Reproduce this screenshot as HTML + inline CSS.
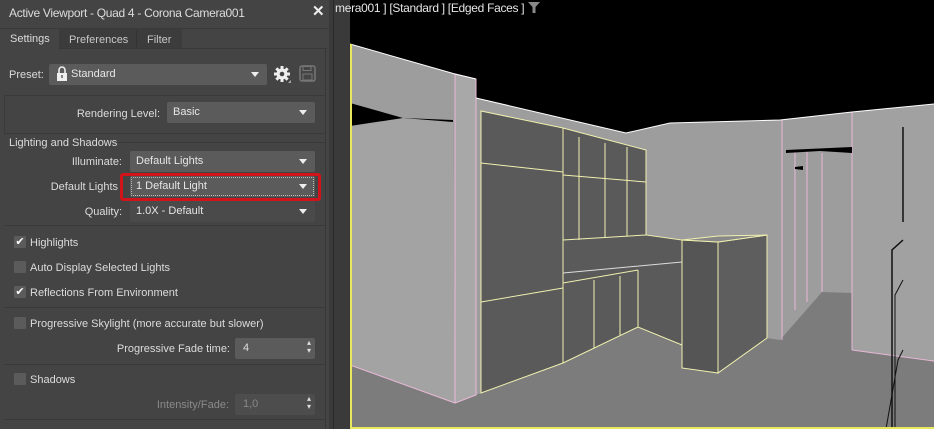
<!DOCTYPE html>
<html><head><meta charset="utf-8"><style>
*{margin:0;padding:0;box-sizing:border-box}
body{width:934px;height:429px;overflow:hidden;background:#000;font-family:"Liberation Sans",sans-serif;font-size:11px;color:#dcdcdc;position:relative}
.a{position:absolute}
#panel{left:0;top:0;width:329px;height:429px;background:#444}
.dd{position:absolute;background:#5b5b5b;border-radius:2px;color:#e6e6e6;padding-left:6px;line-height:21px;height:21px}
.dd:after{content:"";position:absolute;right:8px;top:8px;border-left:4px solid transparent;border-right:4px solid transparent;border-top:5px solid #eee}
.lbl{position:absolute;color:#dcdcdc;line-height:14px;white-space:nowrap}
.r{text-align:right}
.cb{position:absolute;left:14px;width:12px;height:12px;background:#5b5b5b;border-radius:1px;color:#fff;font-size:11px;line-height:12px;text-align:center}
.sep{position:absolute;left:5px;width:320px;height:1px;background:#393939}
.sp{position:absolute;background:#5b5b5b;border-radius:2px;line-height:21px;height:21px;padding-left:8px}
.sp:after{content:"▴\A▾";white-space:pre;position:absolute;right:4px;top:1px;font-size:8px;line-height:8px;color:#ddd}
</style></head><body>
<div id="panel" class="a">
 <div class="lbl" style="left:9px;top:6px;font-size:12px;letter-spacing:-0.3px">Active Viewport - Quad 4 - Corona Camera001</div>
 <div class="lbl" style="left:312px;top:5px;font-size:15px;font-weight:bold;color:#eee">✕</div>
 <div class="a" style="left:0;top:28px;width:329px;height:1px;background:#3a3a3a"></div>
 <div class="a" style="left:59px;top:29px;width:123px;height:19px;background:#3c3c3c"></div>
 <div class="a" style="left:136px;top:30px;width:1px;height:17px;background:#333"></div>
 <div class="lbl" style="left:10px;top:32px">Settings</div>
 <div class="lbl" style="left:69px;top:33px;color:#c8c8c8">Preferences</div>
 <div class="lbl" style="left:147px;top:33px;color:#c8c8c8">Filter</div>
 <div class="a" style="left:59px;top:48px;width:268px;height:1px;background:#383838"></div>
 <div class="a" style="left:325px;top:48px;width:1px;height:381px;background:#383838"></div>
 <div class="lbl" style="left:9px;top:68px">Preset:</div>
 <div class="dd" style="left:49px;top:64px;width:218px;padding-left:22px">Standard</div>
 <svg class="a" style="left:56px;top:66px" width="12" height="16"><path d="M3 7V4a3 3 0 0 1 6 0v3" stroke="#eee" stroke-width="1.6" fill="none"/><rect x="1" y="7" width="10" height="8" fill="#eee"/><rect x="5.3" y="9" width="1.4" height="3" fill="#555"/></svg>
 <svg class="a" style="left:273px;top:65px" width="20" height="20"><g fill="#eee"><circle cx="9" cy="9" r="5.5"/><rect x="7.5" y="1" width="3" height="16"/><rect x="1" y="7.5" width="16" height="3"/><rect x="7.5" y="1" width="3" height="16" transform="rotate(45 9 9)"/><rect x="7.5" y="1" width="3" height="16" transform="rotate(-45 9 9)"/></g><circle cx="9" cy="9" r="2.3" fill="#444"/><path d="M18 15v3h-3z" fill="#aaa"/></svg>
 <svg class="a" style="left:299px;top:65px" width="18" height="18"><rect x="1" y="1" width="15" height="15" rx="2" stroke="#777" stroke-width="1.5" fill="none"/><rect x="4" y="1.5" width="8" height="4" stroke="#777" fill="none"/><rect x="4" y="9" width="9" height="6" stroke="#777" fill="none"/></svg>
 <div class="a" style="left:4px;top:95px;width:322px;height:39px;border:1px solid #3a3a3a;border-right:none"></div>
 <div class="lbl r" style="right:169px;top:107px">Rendering Level:</div>
 <div class="dd" style="left:167px;top:102px;width:148px">Basic</div>
 <div class="lbl" style="left:9px;top:136px">Lighting and Shadows</div>
 <div class="sep" style="top:142px;left:118px;width:207px"></div>
 <div class="lbl r" style="right:207px;top:155px">Illuminate:</div>
 <div class="dd" style="left:130px;top:151px;width:185px">Default Lights</div>
 <div class="lbl r" style="right:211px;top:180px">Default Lights</div>
 <div class="dd" style="left:130px;top:176px;width:185px;outline:1px dotted #bbb;outline-offset:-2px">1 Default Light</div>
 <div class="a" style="left:120px;top:173px;width:201px;height:28px;border:3px solid #d0141a;border-radius:3px"></div>
 <div class="lbl r" style="right:207px;top:205px">Quality:</div>
 <div class="dd" style="left:130px;top:201px;width:185px;background:#4a4a4a">1.0X - Default</div>
 <div class="sep" style="top:225px"></div>
 <div class="cb" style="top:236px">✔</div><div class="lbl" style="left:30px;top:236px">Highlights</div>
 <div class="cb" style="top:261px"></div><div class="lbl" style="left:30px;top:261px">Auto Display Selected Lights</div>
 <div class="cb" style="top:286px">✔</div><div class="lbl" style="left:30px;top:286px">Reflections From Environment</div>
 <div class="sep" style="top:307px"></div>
 <div class="cb" style="top:317px"></div><div class="lbl" style="left:30px;top:317px">Progressive Skylight (more accurate but slower)</div>
 <div class="lbl r" style="right:99px;top:342px">Progressive Fade time:</div>
 <div class="sp" style="left:235px;top:338px;width:80px">4</div>
 <div class="sep" style="top:364px"></div>
 <div class="cb" style="top:373px"></div><div class="lbl" style="left:30px;top:373px">Shadows</div>
 <div class="lbl r" style="right:100px;top:398px;color:#8a8a8a">Intensity/Fade:</div>
 <div class="sp" style="left:235px;top:394px;width:80px;background:#4d4d4d;color:#888">1,0</div>
 <div class="sep" style="top:419px"></div>
</div>
<div class="a" style="left:329px;top:0;width:21px;height:429px;background:#3a3a3a"></div>
<div class="a" style="left:333px;top:0;width:1px;height:429px;background:#2a2a2a"></div>
<svg class="a" style="left:350px;top:0" width="584" height="429">
 <g transform="translate(-350,0)">
 <polygon points="350,44 455,74 476,79 476,98 626,133 670,123 780,120 852,112 934,104 934,429 350,429" fill="#9d9d9d"/>
 <polygon points="350,103 403,118 453,120 453,122 350,126" fill="#000"/>
 <polygon points="350,126 403,118 453,122 455,403 350,365" fill="#a3a3a3"/>
 <polygon points="852,112 934,104 934,360 852,350" fill="#a1a1a1"/>
 <polygon points="350,365 455,403 476,395 563,363 638,327 682,343 682,368 718,373 767,338 780,340 822,292 852,293 852,350 929,360 934,362 934,429 350,429" fill="#7c7c7c"/>
 <polygon points="455,74 476,79 476,395 455,403" fill="#a8a8a8" stroke="#e8b8d8" stroke-width="1"/>
 <polygon points="481,111 563,128 646,150 646,235 682,240 682,345 638,327 563,363 481,393" fill="#5a5a5a" stroke="#f0f0b0" stroke-width="1"/>
 <line x1="481" y1="163" x2="563" y2="172" stroke="#f0f0b0"/>
 <line x1="481" y1="302" x2="563" y2="288" stroke="#f0f0b0"/>
 <line x1="563" y1="128" x2="563" y2="363" stroke="#f0f0b0"/>
 <line x1="563" y1="175" x2="646" y2="182" stroke="#f0f0b0"/>
 <line x1="563" y1="240" x2="646" y2="235" stroke="#f0f0b0"/>
 <line x1="579" y1="137" x2="579" y2="240" stroke="#f0f0b0"/>
 <line x1="605" y1="143" x2="605" y2="238" stroke="#f0f0b0"/>
 <line x1="627" y1="147" x2="627" y2="236" stroke="#f0f0b0"/>
 <line x1="563" y1="283" x2="638" y2="270" stroke="#f0f0b0"/>
 <line x1="563" y1="273" x2="682" y2="262" stroke="#ddd"/>
 <line x1="594" y1="280" x2="594" y2="348" stroke="#f0f0b0"/>
 <line x1="620" y1="276" x2="620" y2="335" stroke="#f0f0b0"/>
 <line x1="638" y1="270" x2="638" y2="327" stroke="#f0f0b0"/>
 <polygon points="682,240 718,242 718,373 682,368" fill="#555" stroke="#f0f0b0"/>
 <polygon points="718,242 767,235 767,338 718,373" fill="#5e5e5e" stroke="#f0f0b0"/>
 <polygon points="682,240 718,236 767,235 718,242" fill="#888" stroke="#f0f0b0"/>
 <line x1="782" y1="120" x2="782" y2="340" stroke="#e8b8d8"/>
 <line x1="795" y1="152" x2="795" y2="310" stroke="#e8b8d8"/>
 <line x1="807" y1="152" x2="807" y2="302" stroke="#e8b8d8"/>
 <line x1="822" y1="153" x2="822" y2="292" stroke="#e8b8d8"/>
 <line x1="852" y1="112" x2="852" y2="350" stroke="#e8b8d8"/>
 <line x1="852" y1="350" x2="934" y2="361" stroke="#e8b8d8"/>
 <polygon points="786,150 852,147 852,153 820,151 786,153" fill="#000"/>
 <polygon points="795,167 803,166 803,170 795,169" fill="#000"/>
 <line x1="903" y1="127" x2="903" y2="222" stroke="#111" stroke-width="1.5"/>
 <polyline points="903,240 892,250 892,429" stroke="#111" fill="none" stroke-width="1.5"/>
 <polyline points="903,280 895,295 895,429" stroke="#111" fill="none"/>
 <polyline points="903,350 898,360 886,429" stroke="#111" fill="none"/>
 <polyline points="350,44 455,74 476,79" stroke="#fff" fill="none"/>
 <polyline points="476,98 626,133 670,123 780,120 852,112 934,104" stroke="#fff" fill="none"/>
 <line x1="350" y1="365" x2="455" y2="403" stroke="#e8b8d8"/>
 <line x1="351" y1="44" x2="351" y2="429" stroke="#e8e860" stroke-width="2"/>
 <line x1="350" y1="428" x2="934" y2="428" stroke="#e8e860" stroke-width="2"/>
 </g>
</svg>
<div class="a" style="left:335px;top:1px;color:#e6e6e6;line-height:14px;font-size:12px;letter-spacing:-0.3px;white-space:pre">mera001 ] [Standard ] [Edged Faces ]</div>
<svg class="a" style="left:527px;top:1px" width="14" height="13"><path d="M1 1h12l-4.5 5v6h-3V6z" fill="#8a8a8a"/></svg>
</body></html>
